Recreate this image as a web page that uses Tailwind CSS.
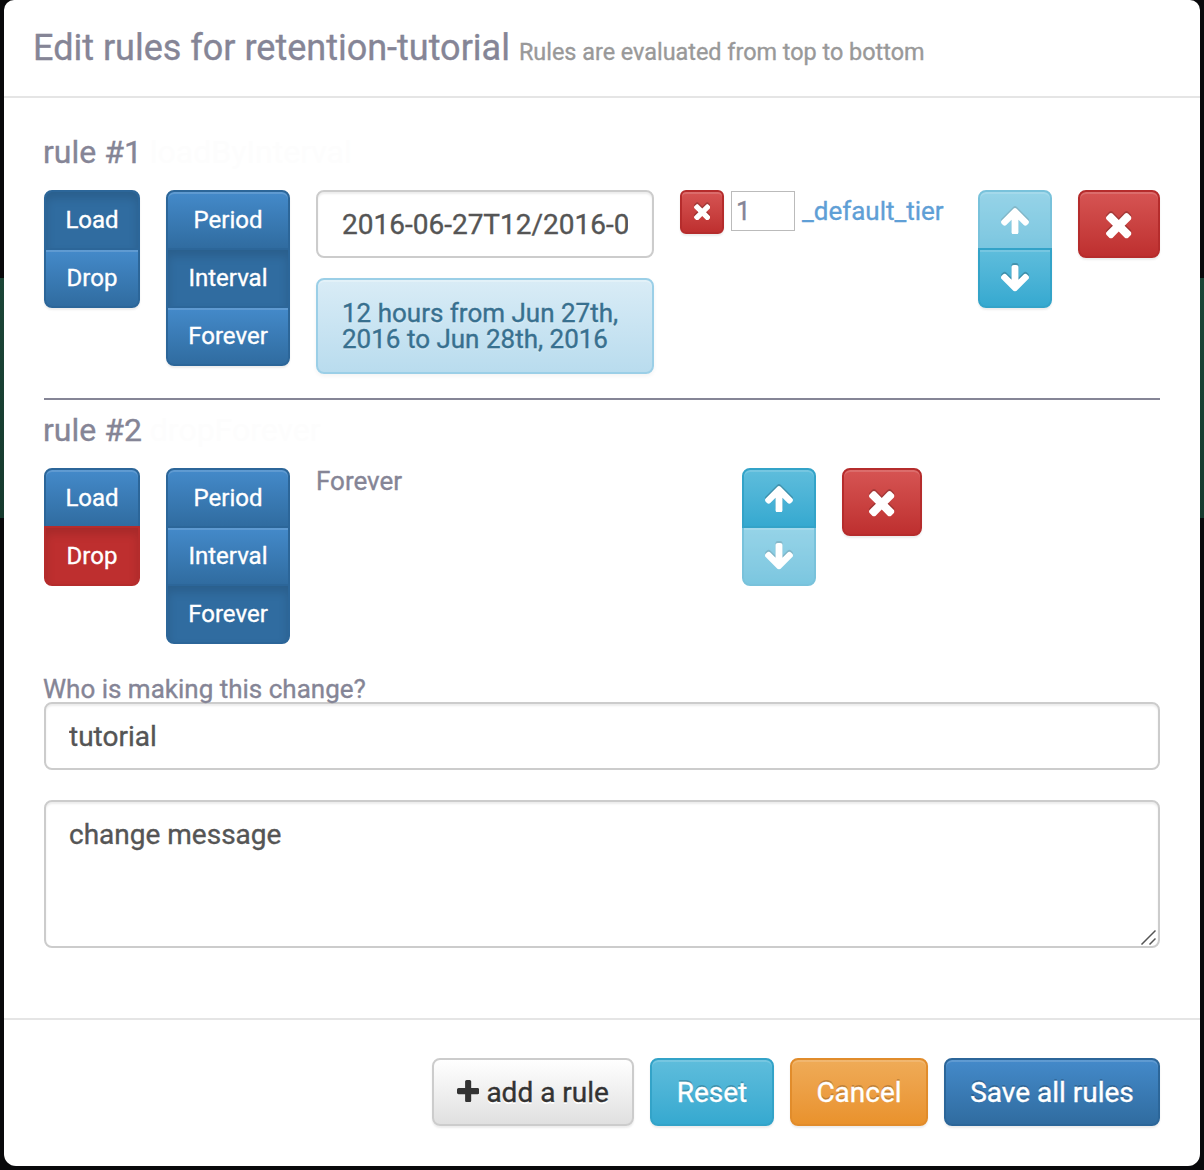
<!DOCTYPE html>
<html lang="en">
<head>
<meta charset="utf-8">
<title>Edit rules</title>
<script src="https://cdn.jsdelivr.net/npm/@tailwindcss/browser@4"></script>
</head>
<body class="h-[1170px] w-[1204px] overflow-hidden bg-[linear-gradient(#09090b_278px,#1b4537_278px,#163a2e_518px,#09090b_518px)] px-1 font-['Roboto',sans-serif] text-[26px] text-[#858596] [-webkit-text-stroke:0.35px]">
<svg class="hidden">
  <symbol id="arrow" viewBox="53 192 1558 1472"><path fill="currentColor" d="M1611 971q0 51-37 90l-75 75q-38 38-91 38-54 0-90-38l-294-293v704q0 52-37.500 84.500t-90.500 32.500h-128q-53 0-90.500-32.500t-37.500-84.500v-704l-294 293q-36 38-90 38t-90-38l-75-75q-38-38-38-90 0-53 38-91l651-651q35-37 90-37 54 0 91 37l651 651q37 39 37 91z"/></symbol>
  <symbol id="times" viewBox="302 366 1188 1188"><path fill="currentColor" d="M1490 1322q0 40-28 68l-136 136q-28 28-68 28t-68-28l-294-294-294 294q-28 28-68 28t-68-28l-136-136q-28-28-28-68t28-68l294-294-294-294q-28-28-28-68t28-68l136-136q28-28 68-28t68 28l294 294 294-294q28-28 68-28t68 28l136 136q28 28 28 68t-28 68l-294 294 294 294q28 28 28 68z"/></symbol>
  <symbol id="plus" viewBox="192 128 1408 1408"><path fill="currentColor" d="M1600 736v192q0 40-28 68t-68 28h-416v416q0 40-28 68t-68 28h-192q-40 0-68-28t-28-68v-416h-416q-40 0-68-28t-28-68v-192q0-40 28-68t68-28h416v-416q0-40 28-68t68-28h192q40 0 68 28t28 68v416h416q40 0 68 28t28 68z"/></symbol>
</svg>
<main class="flex h-[1166px] flex-col rounded-b-xl rounded-t-[10px] bg-white">
  <header class="flex h-[98px] items-baseline gap-[9px] border-b-2 border-[#e5e5e5] pl-[29px] pt-[27px]">
    <h1 class="whitespace-nowrap text-[36px] leading-[42px]">Edit rules for retention-tutorial</h1>
    <small class="whitespace-nowrap text-[23.400px] leading-[42px] text-[#999]">Rules are evaluated from top to bottom</small>
  </header>

  <div class="flex h-[920px] flex-col px-10">
    <section class="h-[300px] pt-[35px]">
      <h2 class="-ml-px h-[57px] whitespace-nowrap text-[32px] leading-[38px]">rule #1 <span class="text-[#fdfdfd] [-webkit-text-stroke:0]">loadByInterval</span></h2>
      <div class="flex items-start gap-[26px]">
        <div class="flex w-24 flex-col rounded-lg text-[24px] text-white shadow-[0_2px_2px_rgba(0,0,0,0.075)] [text-shadow:0_-2px_0_rgba(0,0,0,0.2)]">
          <button class="h-[60px] rounded-t-lg border-2 border-[#2c6699] bg-[#306ca0] shadow-[inset_0_6px_10px_rgba(0,0,0,0.125)]">Load</button>
          <button class="-mt-0.5 h-[60px] rounded-b-lg border-2 border-[#2c6699] bg-linear-to-b from-[#448aca] to-[#306ca0] shadow-[inset_0_2px_0_rgba(255,255,255,0.15)]">Drop</button>
        </div>
        <div class="flex w-[124px] flex-col rounded-lg text-[24px] text-white shadow-[0_2px_2px_rgba(0,0,0,0.075)] [text-shadow:0_-2px_0_rgba(0,0,0,0.2)]">
          <button class="h-[60px] rounded-t-lg border-2 border-[#2c6699] bg-linear-to-b from-[#448aca] to-[#306ca0] shadow-[inset_0_2px_0_rgba(255,255,255,0.15)]">Period</button>
          <button class="-mt-0.5 h-[60px] border-2 border-[#2c6699] bg-[#306ca0] shadow-[inset_0_6px_10px_rgba(0,0,0,0.125)]">Interval</button>
          <button class="-mt-0.5 h-[60px] rounded-b-lg border-2 border-[#2c6699] bg-linear-to-b from-[#448aca] to-[#306ca0] shadow-[inset_0_2px_0_rgba(255,255,255,0.15)]">Forever</button>
        </div>
        <div class="flex w-[338px] flex-col gap-5">
          <input class="h-[68px] w-full rounded-lg border-2 border-[#ccc] px-6 text-[28px] text-[#555] shadow-[inset_0_2px_2px_rgba(0,0,0,0.075)]" value="2016-06-27T12/2016-0">
          <div class="h-24 whitespace-nowrap rounded-lg border-2 border-[#9bcfe7] bg-linear-to-b from-[#d9ecf6] to-[#b9dcee] px-6 pt-5 leading-[26px] text-[#38708f] shadow-[inset_0_2px_0_rgba(255,255,255,0.25),0_2px_4px_rgba(0,0,0,0.05)] [text-shadow:0_2px_0_rgba(255,255,255,0.2)]">12 hours from Jun 27th,<br>2016 to Jun 28th, 2016</div>
        </div>
        <div class="flex w-[272px] items-start">
          <button class="flex size-11 items-center justify-center rounded-md border-2 border-[#b52c2c] bg-linear-to-b from-[#d65453] to-[#be2f2f] text-white shadow-[inset_0_2px_0_rgba(255,255,255,0.15),0_2px_2px_rgba(0,0,0,0.075)]"><svg class="size-[16.5px] drop-shadow-[0_-2px_0_rgba(0,0,0,0.2)]"><use href="#times"/></svg></button>
          <input class="ml-[7px] mt-px h-10 w-16 border border-[#bbb] pl-1 text-[26px]" value="1">
          <a class="ml-[7px] mt-[5px] whitespace-nowrap leading-[32px] text-[#5f9fd6]">_default_tier</a>
        </div>
        <div class="flex w-[74px] flex-col text-white">
          <button class="flex h-[60px] items-center justify-center rounded-t-lg border-2 border-[#33a3c8] bg-linear-to-b from-[#5ebddc] to-[#35a9d0] pt-0.5 opacity-65 shadow-[inset_0_2px_0_rgba(255,255,255,0.15)]"><svg class="h-[26.5px] w-7 drop-shadow-[0_-2px_0_rgba(0,0,0,0.2)]"><use href="#arrow"/></svg></button>
          <button class="z-10 -mt-0.5 flex h-[60px] items-center justify-center rounded-b-lg border-2 border-[#33a3c8] bg-linear-to-b from-[#5ebddc] to-[#35a9d0] pt-px shadow-[inset_0_2px_0_rgba(255,255,255,0.15),0_2px_2px_rgba(0,0,0,0.075)]"><svg class="h-[26.5px] w-7 drop-shadow-[0_-2px_0_rgba(0,0,0,0.2)]"><use href="#arrow" transform="rotate(180 14 13.25)"/></svg></button>
        </div>
        <button class="flex h-[68px] w-[82px] items-center justify-center rounded-lg border-2 border-[#b52c2c] bg-linear-to-b from-[#d65453] to-[#be2f2f] pt-1 text-white shadow-[inset_0_2px_0_rgba(255,255,255,0.15),0_2px_2px_rgba(0,0,0,0.075)]"><svg class="size-[25.5px] drop-shadow-[0_-2px_0_rgba(0,0,0,0.2)]"><use href="#times"/></svg></button>
      </div>
    </section>

    <section class="h-[276px] border-t-2 border-[#858596] pt-[11px]">
      <h2 class="-ml-px h-[57px] whitespace-nowrap text-[32px] leading-[38px]">rule #2 <span class="text-[#fdfdfd] [-webkit-text-stroke:0]">dropForever</span></h2>
      <div class="flex items-start gap-[26px]">
        <div class="flex w-24 flex-col rounded-lg text-[24px] text-white [text-shadow:0_-2px_0_rgba(0,0,0,0.2)]">
          <button class="h-[60px] rounded-t-lg border-2 border-[#2c6699] bg-linear-to-b from-[#448aca] to-[#306ca0] shadow-[inset_0_2px_0_rgba(255,255,255,0.15)]">Load</button>
          <button class="-mt-0.5 h-[60px] rounded-b-lg border-2 border-[#b52c2c] bg-[#be2f2f] shadow-[inset_0_6px_10px_rgba(0,0,0,0.125)]">Drop</button>
        </div>
        <div class="flex w-[124px] flex-col rounded-lg text-[24px] text-white [text-shadow:0_-2px_0_rgba(0,0,0,0.2)]">
          <button class="h-[60px] rounded-t-lg border-2 border-[#2c6699] bg-linear-to-b from-[#448aca] to-[#306ca0] shadow-[inset_0_2px_0_rgba(255,255,255,0.15)]">Period</button>
          <button class="-mt-0.5 h-[60px] border-2 border-[#2c6699] bg-linear-to-b from-[#448aca] to-[#306ca0] shadow-[inset_0_2px_0_rgba(255,255,255,0.15)]">Interval</button>
          <button class="-mt-0.5 h-[60px] rounded-b-lg border-2 border-[#2c6699] bg-[#306ca0] shadow-[inset_0_6px_10px_rgba(0,0,0,0.125)]">Forever</button>
        </div>
        <div class="w-[400px] leading-[26px]">Forever</div>
        <div class="flex w-[74px] flex-col text-white">
          <button class="flex h-[60px] items-center justify-center rounded-t-lg border-2 border-[#33a3c8] bg-linear-to-b from-[#5ebddc] to-[#35a9d0] pt-0.5 shadow-[inset_0_2px_0_rgba(255,255,255,0.15)]"><svg class="h-[26.5px] w-7 drop-shadow-[0_-2px_0_rgba(0,0,0,0.2)]"><use href="#arrow"/></svg></button>
          <button class="-mt-0.5 flex h-[60px] items-center justify-center rounded-b-lg border-2 border-[#33a3c8] bg-linear-to-b from-[#5ebddc] to-[#35a9d0] pt-px opacity-65 shadow-[inset_0_2px_0_rgba(255,255,255,0.15)]"><svg class="h-[26.5px] w-7 drop-shadow-[0_-2px_0_rgba(0,0,0,0.2)]"><use href="#arrow" transform="rotate(180 14 13.25)"/></svg></button>
        </div>
        <button class="flex h-[68px] w-20 items-center justify-center rounded-lg border-2 border-[#b52c2c] bg-linear-to-b from-[#d65453] to-[#be2f2f] pt-1 text-white shadow-[inset_0_2px_0_rgba(255,255,255,0.15),0_2px_2px_rgba(0,0,0,0.075)]"><svg class="size-[25.5px] drop-shadow-[0_-2px_0_rgba(0,0,0,0.2)]"><use href="#times"/></svg></button>
      </div>
    </section>

    <label class="z-10 -ml-px h-7 whitespace-nowrap leading-[30px]" for="author">Who is making this change?</label>
    <input id="author" class="h-[68px] w-full shrink-0 rounded-lg border-2 border-[#ccc] px-[23px] text-[28px] text-[#555] shadow-[inset_0_2px_2px_rgba(0,0,0,0.075)]" value="tutorial">
    <div class="relative mt-[30px] h-[148px]">
      <textarea class="block h-full w-full resize-none rounded-lg border-2 border-[#ccc] px-[23px] py-[13px] text-[28px] leading-[40px] text-[#555] shadow-[inset_0_2px_2px_rgba(0,0,0,0.075)]">change message</textarea>
      <svg class="absolute bottom-[3px] right-1 size-4" fill="none" stroke="#555" stroke-width="1.5"><path d="M1.500 15.500 15.500 1.500M9.500 15.500l6-6"/></svg>
    </div>
  </div>

  <footer class="flex h-[148px] justify-end gap-4 border-t-2 border-[#e5e5e5] pr-10 pt-[38px] text-[28px] text-white">
    <button class="flex h-[68px] w-[202px] items-center justify-center gap-[7px] whitespace-nowrap rounded-lg border-2 border-[#ccc] bg-linear-to-b from-white to-[#e0e0e0] text-[#333] shadow-[inset_0_2px_0_rgba(255,255,255,0.15),0_2px_2px_rgba(0,0,0,0.075)] [text-shadow:0_2px_0_#fff]"><svg class="-mt-0.5 size-[22.300px]"><use href="#plus"/></svg><span class="pt-0.5">add a rule</span></button>
    <button class="h-[68px] w-[124px] rounded-lg border-2 border-[#33a3c8] bg-linear-to-b from-[#5ebddc] to-[#35a9d0] pt-0.5 shadow-[inset_0_2px_0_rgba(255,255,255,0.15),0_2px_2px_rgba(0,0,0,0.075)] [text-shadow:0_-2px_0_rgba(0,0,0,0.2)]">Reset</button>
    <button class="h-[68px] w-[138px] rounded-lg border-2 border-[#e18c2b] bg-linear-to-b from-[#efab57] to-[#e9922c] pt-0.5 shadow-[inset_0_2px_0_rgba(255,255,255,0.15),0_2px_2px_rgba(0,0,0,0.075)] [text-shadow:0_-2px_0_rgba(0,0,0,0.2)]">Cancel</button>
    <button class="h-[68px] w-[216px] whitespace-nowrap rounded-lg border-2 border-[#2c6699] bg-linear-to-b from-[#448aca] to-[#306ca0] pt-0.5 shadow-[inset_0_2px_0_rgba(255,255,255,0.15),0_2px_2px_rgba(0,0,0,0.075)] [text-shadow:0_-2px_0_rgba(0,0,0,0.2)]">Save all rules</button>
  </footer>
</main>
</body>
</html>
